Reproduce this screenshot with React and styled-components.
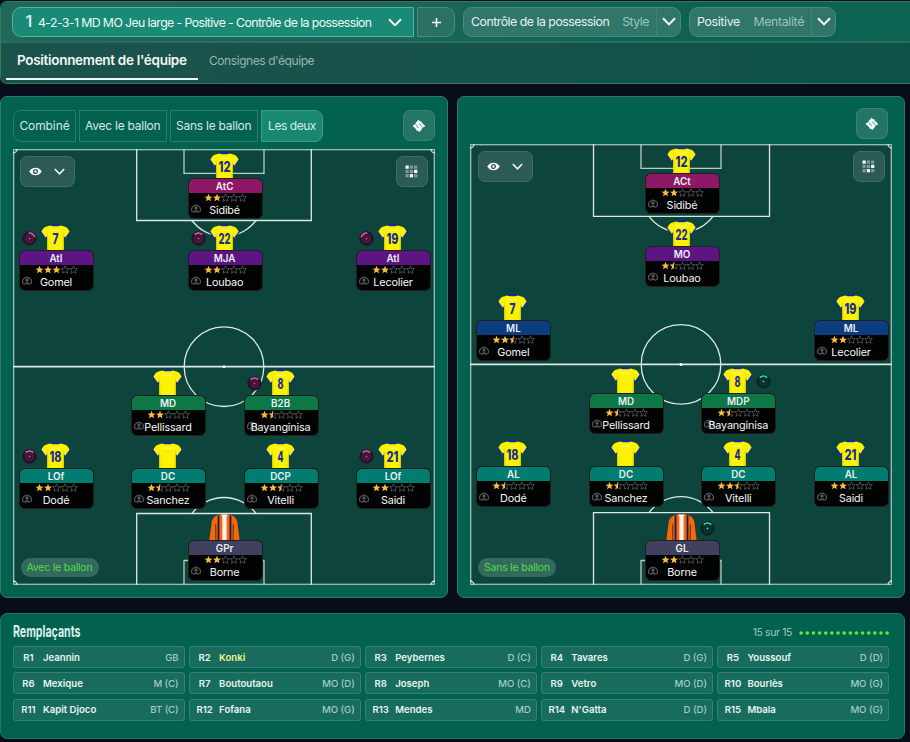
import React from 'react';
import styled, { createGlobalStyle, css } from 'styled-components';

const GlobalStyle = createGlobalStyle`
  * {
    box-sizing: border-box;
  }
  body {
    margin: 0;
    background: #070d1b;
    font-family: Inter, "Liberation Sans", sans-serif;
    color: #e6f3f0;
    overflow: hidden;
  }
  svg {
    display: block;
  }
`;

const Page = styled.div`
  width: 910px;
  height: 742px;
  padding-top: 1px;
  display: flex;
  flex-direction: column;
  overflow: hidden;
`;

const Header = styled.header`
  height: 83px;
  border: 1px solid #32795f;
  border-right: none;
  border-radius: 7px 0 0 7px;
  overflow: hidden;
  flex-shrink: 0;
`;

const Toolbar = styled.div`
  height: 39px;
  padding: 5px 0 0 11px;
  display: flex;
  background: linear-gradient(90deg, #20685a 0%, #1a6657 45%, #0d6251 75%, #0d6351 100%);
`;

const FormationButton = styled.button`
  width: 402px;
  height: 30px;
  padding: 0 11px 0 10px;
  display: flex;
  align-items: center;
  background: #188a76;
  border: 1px solid #5cae9d;
  border-radius: 9px 0 0 9px;
  color: #eefaf7;
  font: 400 12.3px Inter, sans-serif;
  white-space: nowrap;
`;

const FormationNumber = styled.span`
  width: 18px;
  margin-left: -3px;
  padding-bottom: 2px;
  font-size: 16px;
  font-weight: 600;
  line-height: 26px;
  color: #d5efe9;
`;

const FormationName = styled.span`
  flex: 1;
  text-align: left;
  letter-spacing: -0.59px;
`;

const AddButton = styled.button`
  width: 38px;
  height: 30px;
  margin: 0 8px 0 3px;
  padding: 0;
  display: flex;
  align-items: center;
  justify-content: center;
  background: #2a7163;
  border: 1px solid #4b8a7c;
  border-radius: 0 9px 9px 0;
`;

const Select = styled.div`
  width: ${({ $width }) => $width}px;
  height: 30px;
  margin-right: 8px;
  padding: 0 0 1px 7px;
  display: flex;
  align-items: center;
  background: #30766a;
  border: 1px solid #4a897b;
  border-radius: 9px;
  font-size: 12.3px;
  letter-spacing: ${({ $spacing }) => $spacing}px;
  white-space: nowrap;
`;

const SelectLabel = styled.span`
  flex: 1;
  padding-right: 7px;
  text-align: right;
  color: #9cc6bb;
`;

const SelectArrow = styled.span`
  width: 24px;
  height: 28px;
  display: flex;
  align-items: center;
  justify-content: center;
  border-left: 1px solid #438174;
`;

const Tabs = styled.nav`
  height: 42px;
  padding-left: 5px;
  display: flex;
  border-top: 2px solid #286f60;
  background: linear-gradient(90deg, #1b534b 0%, #16534b 50%, #0e5147 100%);
`;

const Tab = styled.div`
  height: 37px;
  padding: ${({ $active }) => ($active ? 9 : 8)}px 11px 0;
  font-size: ${({ $active }) => ($active ? 13.5 : 12)}px;
  font-weight: ${({ $active }) => ($active ? 600 : 400)};
  letter-spacing: ${({ $active }) => ($active ? -0.3 : -0.43)}px;
  line-height: ${({ $active }) => ($active ? 17 : 19)}px;
  color: ${({ $active }) => ($active ? '#f2f8f7' : '#97b6b0')};
  border-bottom: 2px solid ${({ $active }) => ($active ? '#f0f6f5' : 'transparent')};
  white-space: nowrap;
  ${({ $active }) => $active && css`
    width: 192px;
  `}
`;

const Boards = styled.main`
  margin: 12px 5px 0 0;
  height: 502px;
  display: grid;
  grid-template-columns: 448px 448px;
  column-gap: 9px;
  flex-shrink: 0;
`;

const Board = styled.section`
  padding: ${({ $top }) => $top}px 12px 0;
  background: #03614f;
  border: 1px solid #35785f;
  border-radius: 7px;
`;

const BoardBar = styled.div`
  height: ${({ $height }) => $height}px;
  padding-right: ${({ $right }) => $right}px;
  display: flex;
  align-items: flex-start;
  justify-content: space-between;
`;

const Filters = styled.div`
  display: flex;
  gap: 3px;
`;

const Filter = styled.button`
  width: ${({ $width }) => $width}px;
  height: 32px;
  padding: 0 0 1px;
  background: ${({ $active }) => ($active ? '#188873' : 'transparent')};
  border: 1px solid ${({ $active }) => ($active ? '#409c87' : '#2b7d6b')};
  color: #d4ebe6;
  font: 400 12px Inter, sans-serif;
  letter-spacing: -0.25px;
  white-space: nowrap;
  &:first-child {
    border-radius: 8px 0 0 8px;
    letter-spacing: -0.1px;
  }
  &:last-child {
    border-radius: 0 8px 8px 0;
    letter-spacing: -0.45px;
  }
`;

const SquareButton = styled.button`
  width: 32px;
  height: 31px;
  padding: 0;
  display: flex;
  align-items: center;
  justify-content: center;
  background: ${({ $dark }) => ($dark ? '#2b5b54' : '#247565')};
  border: 1px solid ${({ $dark }) => ($dark ? '#406d66' : '#3b8475')};
  border-radius: 7px;
`;

const Field = styled.div`
  position: relative;
  width: 422px;
  height: ${({ $height }) => $height}px;
  background: #0d443b;
`;

const FieldLines = styled.svg`
  width: 100%;
  height: 100%;
`;

const FieldTools = styled.div`
  position: absolute;
  left: ${({ $left }) => $left}px;
  right: 7.5px;
  top: 7px;
  display: flex;
  justify-content: space-between;
`;

const ViewButton = styled.button`
  width: 55px;
  height: 31px;
  padding: 0 9px 0 8px;
  display: flex;
  align-items: center;
  justify-content: space-between;
  background: #2b5b54;
  border: 1px solid #406d66;
  border-radius: 7px;
`;

const PhaseTag = styled.div`
  position: absolute;
  left: ${({ $left }) => $left}px;
  bottom: 8px;
  height: 19px;
  width: 78px;
  border-radius: 10px;
  background: #33695e;
  color: #53dd3d;
  font-size: 10.5px;
  line-height: 19px;
  letter-spacing: -0.22px;
  text-align: center;
  white-space: nowrap;
`;

const Player = styled.div`
  position: absolute;
  left: ${({ $x }) => $x}px;
  top: ${({ $y }) => $y}px;
  width: 75px;
`;

const ShirtRow = styled.div`
  height: 26px;
  padding-left: 21px;
`;

const Dial = styled.svg`
  position: absolute;
  top: 7px;
  left: ${({ $right }) => ($right ? 55 : 3)}px;
`;

const Card = styled.div`
  height: 41px;
  background: #020303;
  border: 1px solid #221f21;
  border-radius: 6px;
  overflow: hidden;
`;

const Role = styled.div`
  height: 15px;
  margin: -1px -1px 0;
  padding-right: 1px;
  background: ${({ $color }) => $color};
  border: 1px solid rgba(255, 255, 255, 0.15);
  border-bottom: none;
  border-radius: 6px 6px 0 0;
  color: #e9f0f3;
  font-size: 9.8px;
  font-weight: 600;
  line-height: 15px;
  text-align: center;
`;

const Stars = styled.svg`
  margin: 0 0 0 15px;
`;

const NameRow = styled.div`
  position: relative;
  height: 17px;
  padding-right: 1px;
  color: #f4f6f6;
  font-size: 10.8px;
  letter-spacing: -0.15px;
  line-height: 18px;
  text-align: center;
  white-space: nowrap;
`;

const Avatar = styled.svg`
  position: absolute;
  left: 2px;
  top: 2px;
`;

const PlayerName = styled.span`
  position: relative;
`;

const Bench = styled.section`
  width: 905px;
  height: 126px;
  margin-top: 15px;
  padding: 8px 15px 0 12px;
  background: #03614f;
  border: 1px solid #247666;
  border-radius: 7px;
  flex-shrink: 0;
`;

const BenchHead = styled.div`
  height: 24px;
  display: flex;
  align-items: center;
`;

const BenchTitle = styled.h2`
  flex: 1;
  margin: 0;
  padding-bottom: 4px;
  font-size: 15.5px;
  font-weight: 700;
  line-height: 18px;
  color: #dcefed;
  transform: scaleX(0.685);
  transform-origin: left;
`;

const BenchCount = styled.span`
  padding-bottom: 3px;
  margin-right: 5px;
  color: #a1c8bf;
  font-size: 10.5px;
  letter-spacing: -0.4px;
`;

const BenchDots = styled.svg`
  margin-bottom: 2px;
`;

const BenchGrid = styled.div`
  display: grid;
  grid-template-columns: repeat(5, 1fr);
  column-gap: 4.5px;
  row-gap: 4.3px;
`;

const Substitute = styled.div`
  height: 22px;
  padding: 0 5px 0 0;
  display: flex;
  align-items: center;
  background: #176c5d;
  border: 1px solid #358070;
  border-radius: 3px;
  font-size: 9.6px;
  font-weight: 600;
  white-space: nowrap;
`;

const SubNumber = styled.span`
  width: 29px;
  text-align: center;
  color: #e5f5f0;
`;

const SubName = styled.span`
  flex: 1;
  color: ${({ $highlight }) => ($highlight ? '#f6f08d' : '#e8f6f2')};
`;

const SubPosition = styled.span`
  font-size: 9.6px;
  font-weight: 500;
  letter-spacing: -0.05px;
  color: #a7cbc2;
`;

const COLORS = {
  attack: '#8e1766',
  support: '#5d1584',
  wing: '#0c3d80',
  midfield: '#0d7845',
  defense: '#017c70',
  keeper: '#42405f',
};

const WITH_BALL = [
  { x: 174.6, y: 3, number: 12, role: 'AtC', color: 'attack', stars: 2, name: 'Sidibé' },
  { x: 6, y: 75, number: 7, role: 'AtI', color: 'support', stars: 3, name: 'Gomel', dial: 35 },
  { x: 174.6, y: 75, number: 22, role: 'MJA', color: 'support', stars: 2, name: 'Loubao', dial: 0 },
  { x: 343, y: 75, number: 19, role: 'AtI', color: 'support', stars: 2, name: 'Lecolier', dial: -35 },
  { x: 118, y: 220.4, role: 'MD', color: 'midfield', stars: 2, name: 'Pellissard' },
  { x: 230.6, y: 220.4, number: 8, role: 'B2B', color: 'midfield', stars: 1.5, name: 'Bayanginisa', dial: 0 },
  { x: 6, y: 293, number: 18, role: 'LOf', color: 'defense', stars: 2, name: 'Dodé', dial: 0 },
  { x: 118, y: 293, role: 'DC', color: 'defense', stars: 1.5, name: 'Sanchez' },
  { x: 230.6, y: 293, number: 4, role: 'DCP', color: 'defense', stars: 2.5, name: 'Vitelli' },
  { x: 343, y: 293, number: 21, role: 'LOf', color: 'defense', stars: 2, name: 'Saidi', dial: 0 },
  { x: 174.6, y: 365.4, keeper: true, role: 'GPr', color: 'keeper', stars: 2, name: 'Borne' },
];

const WITHOUT_BALL = [
  { x: 175, y: 3, number: 12, role: 'ACt', color: 'attack', stars: 2, name: 'Sidibé' },
  { x: 175, y: 76.4, number: 22, role: 'MO', color: 'support', stars: 1.5, name: 'Loubao' },
  { x: 6.4, y: 150, number: 7, role: 'ML', color: 'wing', stars: 2.5, name: 'Gomel' },
  { x: 344, y: 150, number: 19, role: 'ML', color: 'wing', stars: 2, name: 'Lecolier' },
  { x: 119, y: 223, role: 'MD', color: 'midfield', stars: 1.5, name: 'Pellissard' },
  { x: 231.3, y: 223, number: 8, role: 'MDP', color: 'midfield', stars: 1.5, name: 'Bayanginisa', dial: 0 },
  { x: 6.4, y: 296.4, number: 18, role: 'AL', color: 'defense', stars: 1.5, name: 'Dodé' },
  { x: 119, y: 296.4, role: 'DC', color: 'defense', stars: 1.5, name: 'Sanchez' },
  { x: 231.3, y: 296.4, number: 4, role: 'DC', color: 'defense', stars: 2.5, name: 'Vitelli' },
  { x: 344, y: 296.4, number: 21, role: 'AL', color: 'defense', stars: 2, name: 'Saidi' },
  { x: 175, y: 370, keeper: true, role: 'GL', color: 'keeper', stars: 2, name: 'Borne', dial: 0 },
];

const SUBSTITUTES = [
  ['Jeannin', 'GB'], ['Konki', 'D (G)'], ['Peybernes', 'D (C)'], ['Tavares', 'D (G)'], ['Youssouf', 'D (D)'],
  ['Mexique', 'M (C)'], ['Boutoutaou', 'MO (D)'], ['Joseph', 'MO (C)'], ['Vetro', 'MO (D)'], ['Bourlès', 'MO (G)'],
  ['Kapit Djoco', 'BT (C)'], ['Fofana', 'MO (G)'], ['Mendes', 'MD'], ["N'Gatta", 'D (D)'], ['Mbala', 'MO (G)'],
];

const Chevron = ({ width = 14, stroke = 2 }) => (
  <svg width={width} height={width * 0.64} viewBox="0 0 14 9" fill="none">
    <path d="M1 1.2 L7 7.4 L13 1.2" stroke="#f4fbf9" strokeWidth={stroke} />
  </svg>
);

const TacticIcon = () => (
  <svg width="14" height="14" viewBox="0 0 14 14">
    <path d="M6.6 .7 L8.3 2.4 L9.2 2 L9.8 3.7 L13.3 6.9 L11.8 8.3 L10.4 8.6 L9.8 10.3 L7.4 13.1 L5.6 11.4 L4.7 11.9 L4.2 10.2 L.6 7 L2.6 5.2 L3.4 5 L3.8 3.7Z" fill="#f5fbfa" />
    <path d="M3.6 5.6 L5 6.7 L5.2 8 L6.9 8.6 M6.9 4.9 L8.7 5.6 L9 6.9 L10.4 8" fill="none" stroke="#247565" strokeWidth=".7" />
  </svg>
);

const GridIcon = () => (
  <svg width="13" height="13" viewBox="0 0 13 13">
    {[0, 1, 2, 3, 4, 5, 6, 7, 8].map((i) => (
      <rect
        key={i}
        x={0.5 + (i % 3) * 4.3}
        y={0.5 + Math.floor(i / 3) * 4.3}
        width="3.2"
        height="3.2"
        fill={[0, 5, 7].includes(i) ? '#fff' : '#7f9d98'}
      />
    ))}
  </svg>
);

const EyeIcon = () => (
  <svg width="13" height="9" viewBox="0 0 13 9">
    <path d="M.3 4.5 C2 1.7 4 .7 6.5 .7 S11 1.7 12.7 4.5 C11 7.3 9 8.3 6.5 8.3 S2 7.3 .3 4.5Z" fill="#fff" />
    <circle cx="6.5" cy="4.5" r="1.9" fill="#fff" stroke="#2b5b54" strokeWidth="1.3" />
  </svg>
);

const Shirt = ({ number }) => (
  <svg width="31" height="26" viewBox="0 0 31 26">
    <path d="M10.5 1.6 L12 .2 H19 L20.5 1.6 L19 3.4 H12Z" fill="#1622b0" />
    <path d="M.2 8 L5.4 15.2 L8 13 L3.6 5Z M30.8 8 L25.6 15.2 L23 13 L27.4 5Z" fill="#1527b8" />
    <path d="M10 1.5 Q15.5 3.2 21 1.5 L26 3 Q27.6 3.8 29.6 7.4 L25.2 13.8 L23.8 12 V26 H7.2 V12 L5.8 13.8 L1.4 7.4 Q3.4 3.8 5 3Z" fill="#fbf200" />
    <path d="M7.2 7 V26 H8.5 L8 12Z M23.8 7 V26 H22.5 L23 12Z" fill="#d8cf08" />
    <path d="M10 5.8 Q15.5 7.2 21 5.8" stroke="#fffa8c" strokeWidth=".8" fill="none" />
    {number && (
      <text
        x="15.5"
        y="19.6"
        textAnchor="middle"
        textLength={number > 9 ? 12 : 6}
        lengthAdjust="spacingAndGlyphs"
        fontFamily="Inter, sans-serif"
        fontWeight="800"
        fontSize="14.5"
        fill="#1c2c96"
      >
        {number}
      </text>
    )}
  </svg>
);

const KeeperShirt = () => (
  <svg width="31" height="26" viewBox="0 0 31 26">
    <path d="M8 1.4 L12 .4 H19 L23 1.4 Q26.5 2.5 28.2 7 L30.6 26 H.4 L2.8 7 Q4.5 2.5 8 1.4Z" fill="#f76709" />
    <path d="M6.2 9 L6.4 26 H7.3 V12Z M24.8 9 L24.6 26 H23.7 V12Z" fill="#4a2c20" />
    <path d="M8.6 1.6 H10.4 V26 H8.6Z M20.6 1.6 H22.4 V26 H20.6Z" fill="#191b58" />
    <path d="M12 .4 H19 L17.6 2.4 V26 H13.4 V2.4Z" fill="#f8f4f0" />
  </svg>
);

const RoleDial = ({ right, angle }) => (
  <Dial $right={right} width="15" height="15" viewBox="0 0 15 15">
    <circle cx="7.5" cy="7.5" r="6.6" fill={right ? '#072e2c' : '#35122e'} stroke={right ? '#06211f' : '#210e20'} />
    <circle cx="7.5" cy="7.5" r="3.4" fill="none" stroke={right ? '#0c3c38' : '#54234a'} strokeWidth="1" />
    <circle cx="7.5" cy="7.5" r=".9" fill={right ? '#27e8b5' : '#e64ca9'} />
    <path
      d="M3.7 3.6 A5.4 5.4 0 0 1 11.3 3.6"
      transform={`rotate(${angle} 7.5 7.5)`}
      fill="none"
      stroke={right ? '#26dfb0' : '#f05ab3'}
      strokeWidth="1.5"
    />
  </Dial>
);

const STAR = 'M4 .3 L5.1 3 L7.9 3.2 L5.8 5 L6.5 7.8 L4 6.3 L1.5 7.8 L2.2 5 L.1 3.2 L2.9 3Z';
const HALF_STAR = 'M4 .3 V6.3 L1.5 7.8 L2.2 5 L.1 3.2 L2.9 3Z';

const Rating = ({ value }) => (
  <Stars width="43" height="9" viewBox="0 0 43 9">
    {[0, 1, 2, 3, 4].map((i) => (
      <g key={i} transform={`translate(${0.5 + i * 8.5} .5)`}>
        {value - i < 1 && <path d={STAR} fill="none" stroke="#77777a" strokeWidth=".6" />}
        {value - i >= 1 && <path d={STAR} fill="#fbbb3b" />}
        {value - i === 0.5 && <path d={HALF_STAR} fill="#fbbb3b" />}
      </g>
    ))}
  </Stars>
);

const PlayerItem = ({ player, right }) => (
  <Player $x={player.x} $y={player.y}>
    <ShirtRow>{player.keeper ? <KeeperShirt /> : <Shirt number={player.number} />}</ShirtRow>
    {player.dial !== undefined && <RoleDial right={right} angle={player.dial} />}
    <Card>
      <Role $color={COLORS[player.color]}>{player.role}</Role>
      <Rating value={player.stars} />
      <NameRow>
        <Avatar width="10" height="10" viewBox="0 0 10 10">
          <path d="M1.6 8.2 A4.3 4.3 0 1 1 8.4 8.2" fill="none" stroke="#58585a" strokeWidth="1.2" />
          <circle cx="5" cy="4" r="1.7" fill="#58585a" />
          <path d="M1.8 8.4 Q2.8 6.3 5 6.3 T8.2 8.4 L6.8 8.8 Q5 7 3.2 8.8Z" fill="#58585a" />
        </Avatar>
        <PlayerName>{player.name}</PlayerName>
      </NameRow>
    </Card>
  </Player>
);

const Pitch = ({ height, half, boxTop, boxBottom, goalTop, goalBottom, boxLeft, boxRight, players, right, label }) => (
  <Field $height={height}>
    <FieldLines viewBox={`0 0 422 ${height}`} fill="none" stroke="#dbe8e4" strokeWidth="1.3">
      <rect x=".7" y=".7" width="420.6" height={height - 1.4} stroke="#9fbdb5" />
      <path d={`M0 ${half} H422`} strokeWidth="1.8" />
      <circle cx="211" cy={half} r="39.8" />
      <circle cx="211" cy={half} r="1.5" fill="#fff" stroke="none" />
      <path d={`M${boxLeft} 0 V${boxTop} H${boxRight} V0`} />
      <path d={`M${boxLeft} ${height} V${boxBottom} H${boxRight} V${height}`} />
      <path d={`M171 0 V${goalTop} H251 V0 M171 ${height} V${goalBottom} H251 V${height}`} stroke="#b9cec9" />
      <path d={`M179 ${boxTop} A40 40 0 0 0 243 ${boxTop}`} />
      <path d={`M179 ${boxBottom} A40 40 0 0 1 243 ${boxBottom}`} />
      <path d={`M4 0 A4 4 0 0 1 0 4 M418 0 A4 4 0 0 0 422 4 M0 ${height - 4} A4 4 0 0 1 4 ${height} M422 ${height - 4} A4 4 0 0 0 418 ${height}`} />
    </FieldLines>
    <FieldTools $left={right ? 8 : 7}>
      <ViewButton>
        <EyeIcon />
        <Chevron width={11} stroke={2} />
      </ViewButton>
      <SquareButton $dark>
        <GridIcon />
      </SquareButton>
    </FieldTools>
    {players.map((player) => (
      <PlayerItem key={player.name} player={player} right={right} />
    ))}
    <PhaseTag $left={right ? 8 : 7.5}>{label}</PhaseTag>
  </Field>
);

const App = () => (
  <Page>
    <GlobalStyle />
    <Header>
      <Toolbar>
        <FormationButton>
          <FormationNumber>1</FormationNumber>
          <FormationName>4-2-3-1 MD MO Jeu large - Positive - Contrôle de la possession</FormationName>
          <Chevron />
        </FormationButton>
        <AddButton>
          <svg width="9" height="9" viewBox="0 0 9 9">
            <path d="M4.5 0 V9 M0 4.5 H9" stroke="#fff" strokeWidth="1.6" />
          </svg>
        </AddButton>
        <Select $width={218} $spacing={-0.48}>
          Contrôle de la possession
          <SelectLabel>Style</SelectLabel>
          <SelectArrow><Chevron /></SelectArrow>
        </Select>
        <Select $width={147} $spacing={-0.33}>
          Positive
          <SelectLabel>Mentalité</SelectLabel>
          <SelectArrow><Chevron /></SelectArrow>
        </Select>
      </Toolbar>
      <Tabs>
        <Tab $active>Positionnement de l'équipe</Tab>
        <Tab>Consignes d'équipe</Tab>
      </Tabs>
    </Header>

    <Boards>
      <Board $top={13}>
        <BoardBar $height={39} $right={0}>
          <Filters>
            <Filter $width={63}>Combiné</Filter>
            <Filter $width={87.5}>Avec le ballon</Filter>
            <Filter $width={88.5}>Sans le ballon</Filter>
            <Filter $width={62} $active>Les deux</Filter>
          </Filters>
          <SquareButton><TacticIcon /></SquareButton>
        </BoardBar>
        <Pitch
          height={436}
          half={217.7}
          boxLeft={123.7}
          boxRight={298.3}
          boxTop={71.5}
          boxBottom={364.5}
          goalTop={24.3}
          goalBottom={411.5}
          players={WITH_BALL}
          label="Avec le ballon"
        />
      </Board>
      <Board $top={11}>
        <BoardBar $height={36} $right={4}>
          <span />
          <SquareButton><TacticIcon /></SquareButton>
        </BoardBar>
        <Pitch
          height={441}
          half={220.4}
          boxLeft={123.5}
          boxRight={299.5}
          boxTop={72.3}
          boxBottom={368.6}
          goalTop={24.3}
          goalBottom={416.5}
          players={WITHOUT_BALL}
          right
          label="Sans le ballon"
        />
      </Board>
    </Boards>

    <Bench>
      <BenchHead>
        <BenchTitle>Remplaçants</BenchTitle>
        <BenchCount>15 sur 15</BenchCount>
        <BenchDots width="92" height="4" viewBox="0 0 92 4">
          {SUBSTITUTES.map(([name], i) => (
            <circle key={name} cx={4.2 + i * 6.14} cy="2" r="1.8" fill="#5aee36" />
          ))}
        </BenchDots>
      </BenchHead>
      <BenchGrid>
        {SUBSTITUTES.map(([name, position], i) => (
          <Substitute key={name}>
            <SubNumber>R{i + 1}</SubNumber>
            <SubName $highlight={name === 'Konki'}>{name}</SubName>
            <SubPosition>{position}</SubPosition>
          </Substitute>
        ))}
      </BenchGrid>
    </Bench>
  </Page>
);

export default App;
